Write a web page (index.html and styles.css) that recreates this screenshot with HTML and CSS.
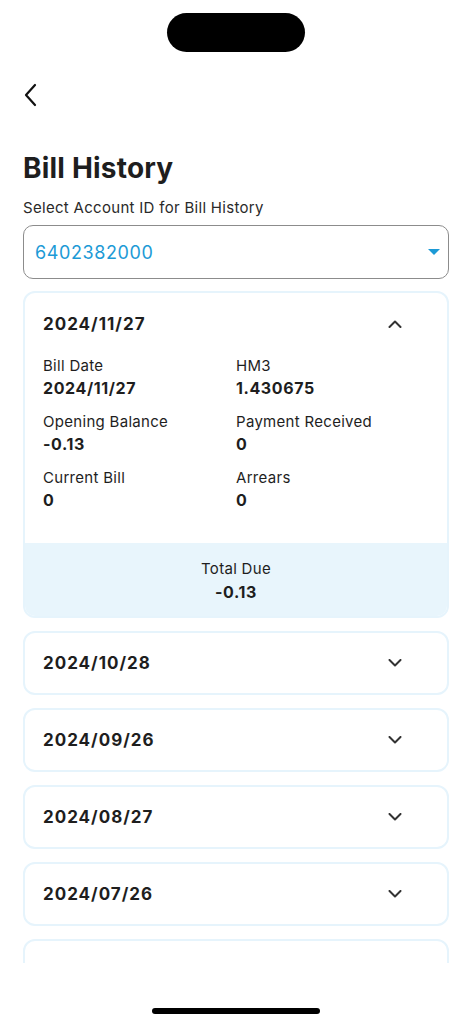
FILE: index.html
```html
<!DOCTYPE html>
<html lang="en">
<head>
  <meta charset="UTF-8">
  <meta name="viewport" content="width=device-width, initial-scale=1.0">
  <title>Bill History</title>

  <link rel="stylesheet" href="styles.css">

</head>

<body>
  <div id="wrap">
    <!-- 상단 아일랜드 -->
    <div class="island"></div>

    <!-- 뒤로가기 -->
    <div class="nav">
      <svg class="back" width="24" height="24" viewBox="0 0 24 24">
        <path d="M16 2 L7 12 L16 22" fill="none" stroke="#111" stroke-width="2.2" stroke-linecap="round" stroke-linejoin="round"/>
      </svg>
    </div>

    <div class="cont">
      <h1 class="tit">Bill History</h1>
      <p class="lbl">Select Account ID for Bill History</p>

      <div class="sel">
        <span>6402382000</span>
        <svg width="12" height="6" viewBox="0 0 12 6"><path d="M0 0 H12 L6 6 Z" fill="#1c9ad6"/></svg>
      </div>

      <!-- 청구내역 목록 -->
      <div class="list">
        <div class="card open">
          <div class="head">
            <span>2024/11/27</span>
            <svg class="chev" width="14" height="8" viewBox="0 0 14 8"><path d="M1.5 7 L7 1.5 L12.5 7" fill="none" stroke="#333" stroke-width="2" stroke-linecap="round" stroke-linejoin="round"/></svg>
          </div>
          <ul class="info">
            <li><p>Bill Date</p><b>2024/11/27</b></li>
            <li><p>HM3</p><b>1.430675</b></li>
            <li><p>Opening Balance</p><b>-0.13</b></li>
            <li><p>Payment Received</p><b>0</b></li>
            <li><p>Current Bill</p><b>0</b></li>
            <li><p>Arrears</p><b>0</b></li>
          </ul>
          <div class="total">
            <p>Total Due</p>
            <b>-0.13</b>
          </div>
        </div>

        <div class="card">
          <div class="head">
            <span>2024/10/28</span>
            <svg class="chev" width="14" height="8" viewBox="0 0 14 8"><path d="M1.5 1 L7 6.5 L12.5 1" fill="none" stroke="#333" stroke-width="2" stroke-linecap="round" stroke-linejoin="round"/></svg>
          </div>
        </div>
        <div class="card">
          <div class="head">
            <span>2024/09/26</span>
            <svg class="chev" width="14" height="8" viewBox="0 0 14 8"><path d="M1.5 1 L7 6.5 L12.5 1" fill="none" stroke="#333" stroke-width="2" stroke-linecap="round" stroke-linejoin="round"/></svg>
          </div>
        </div>
        <div class="card">
          <div class="head">
            <span>2024/08/27</span>
            <svg class="chev" width="14" height="8" viewBox="0 0 14 8"><path d="M1.5 1 L7 6.5 L12.5 1" fill="none" stroke="#333" stroke-width="2" stroke-linecap="round" stroke-linejoin="round"/></svg>
          </div>
        </div>
        <div class="card">
          <div class="head">
            <span>2024/07/26</span>
            <svg class="chev" width="14" height="8" viewBox="0 0 14 8"><path d="M1.5 1 L7 6.5 L12.5 1" fill="none" stroke="#333" stroke-width="2" stroke-linecap="round" stroke-linejoin="round"/></svg>
          </div>
        </div>
        <!-- 스크롤로 잘린 카드 -->
        <div class="card">
          <div class="head"></div>
        </div>
      </div>
    </div>

    <!-- 홈 인디케이터 -->
    <div class="home"></div>
  </div>
</body>
</html>
```

FILE: styles.css
```css
html, body{
  margin: 0;
  padding: 0;
  background: #fff;
}
ul, ol, p, h1{
  margin: 0;
  padding: 0;
  list-style: none;
}

#wrap{
  width: 472px;
  height: 1024px;
  font-family: Inter, "Noto Sans", sans-serif;
  color: #1e1e1e;
  overflow: hidden;
}

/* 아일랜드 */
.island{
  width: 138px;
  height: 39px;
  margin: 13px auto 0;
  border-radius: 20px;
  background: #000;
}

.nav{
  height: 24px;
  margin-top: 31px;
  padding-left: 19px;
}
.back{
  display: block;
}

.cont{
  padding: 0 23px;
}

.tit{
  margin-top: 44px;
  font-size: 28px;
  line-height: 34px;
  font-weight: 700;
  letter-spacing: 0.2px;
}

.lbl{
  margin-top: 13px;
  font-size: 15px;
  line-height: 20px;
  letter-spacing: 0.3px;
  color: #2a2a2a;
}

/* 셀렉트 박스 */
.sel{
  display: flex;
  align-items: center;
  justify-content: space-between;
  height: 52px;
  margin-top: 7px;
  padding: 0 8px 0 11px;
  border: 1px solid #8c8c8c;
  border-radius: 10px;
  font-size: 18px;
  letter-spacing: 0.6px;
  color: #1c9ad6;
}

.list{
  height: 672px;
  margin-top: 12px;
  overflow: hidden;
}

.card{
  margin-bottom: 13px;
  border: 2px solid #e6f4fc;
  border-radius: 12px;
  overflow: hidden;
}

.head{
  display: flex;
  align-items: center;
  justify-content: space-between;
  height: 60px;
  padding: 0 45px 0 18px;
  font-size: 17px;
  font-weight: 700;
  letter-spacing: 1px;
}
.chev{
  display: block;
}
.open .head{
  height: 62px;
}

/* 상세 정보 */
.info{
  display: grid;
  grid-template-columns: 193px 1fr;
  row-gap: 12px;
  padding: 0 18px 32px;
}
.info p{
  font-size: 15px;
  line-height: 22px;
  letter-spacing: 0.3px;
}
.info b{
  display: block;
  font-size: 16px;
  line-height: 22px;
  letter-spacing: 0.6px;
}

.total{
  padding: 15px 0 13px;
  text-align: center;
  background: #e8f5fc;
}
.total p{
  font-size: 15px;
  line-height: 22px;
  letter-spacing: 0.3px;
}
.total b{
  display: block;
  margin-top: 1px;
  font-size: 16px;
  line-height: 22px;
  letter-spacing: 0.6px;
}

.home{
  width: 168px;
  height: 6px;
  margin: 45px auto 0;
  border-radius: 3px;
  background: #000;
}
```
